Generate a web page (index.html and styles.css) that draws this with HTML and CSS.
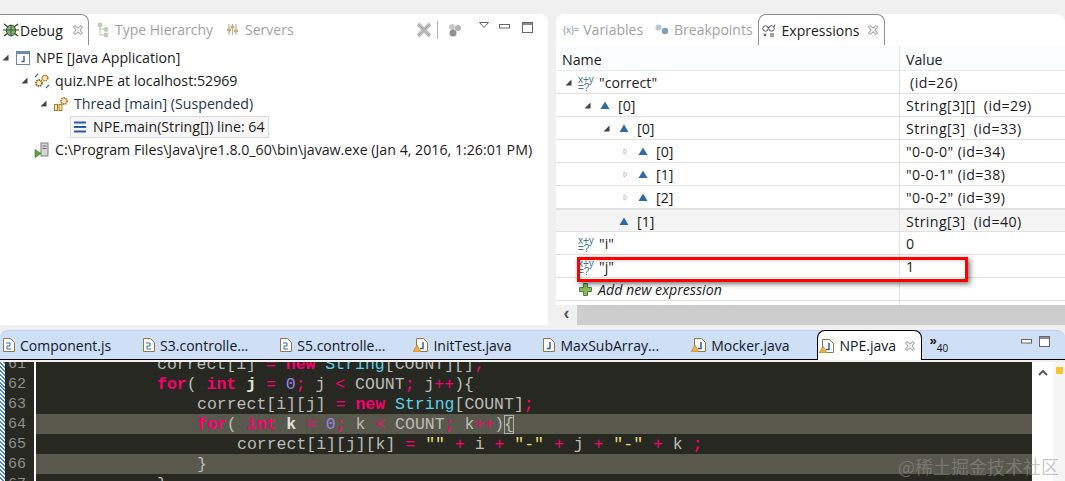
FILE: index.html
```html
<!DOCTYPE html>
<html lang="en">
<head>
  <meta charset="UTF-8" />
  <title>NPE.java - Debug</title>
  <link rel="stylesheet" href="styles.css">
</head>
<body>
  <svg class="defs">
    <symbol id="i-close" viewBox="0 0 12 12"><path d="M1.5 3 3 1.5 6 4.2 9 1.5 10.5 3 7.8 6l2.7 3L9 10.5 6 7.8l-3 2.7L1.5 9l2.7-3z" fill="#fff" stroke="#8c8c8c"/></symbol>
    <symbol id="i-bug" viewBox="0 0 16 16"><path d="M1 2l4 3M15 2l-4 3M0 8h4M16 8h-4M1 14l4-3M15 14l-4-3" stroke="#24402c" stroke-width="1.2"/><ellipse cx="8" cy="8.5" rx="4.6" ry="5.4" fill="#86b06c" stroke="#2c4a30"/><path d="M8 3v11M4 8h8" stroke="#2c4a30" stroke-width=".8"/></symbol>
    <symbol id="i-hier" viewBox="0 0 12 16"><path d="M3 3v10h5M3 7h5" stroke="#b9c9b5" fill="none"/><circle cx="3" cy="3" r="2.4" fill="#b6d3ae"/><circle cx="9" cy="7.5" r="2.4" fill="#b6d3ae"/><circle cx="9" cy="13" r="2.4" fill="#b6d3ae"/></symbol>
    <symbol id="i-servers" viewBox="0 0 13 13"><path d="M3 1v11M6.500 1v11M10 1v11" stroke="#b5b5a5" stroke-width="1.2"/><path d="M1 7h4M4.500 4h4M8 8h4" stroke="#c8b070" stroke-width="2.400"/></symbol>
    <symbol id="i-app" viewBox="0 0 16 16"><rect x="1.500" y="1.500" width="13" height="13" fill="#fff" stroke="#6d8aa8"/><path d="M2 3h12" stroke="#6d8aa8" stroke-width="2"/><path d="M9 6v5.500H6.500" stroke="#2f62a0" stroke-width="1.400" fill="none"/></symbol>
    <symbol id="i-gears" viewBox="0 0 16 16"><path d="M1 4 4 1M15 12l-3 3" stroke="#3a6ea5" stroke-width="1.200"/><circle cx="11" cy="5" r="2.800" fill="#fff0c8" stroke="#b87a20" stroke-width="1.600" stroke-dasharray="1.600 .6"/><circle cx="5" cy="10" r="3" fill="#fff0c8" stroke="#8f6420" stroke-width="1.800" stroke-dasharray="1.600 .6"/></symbol>
    <symbol id="i-thread" viewBox="0 0 16 16"><rect x="1.500" y="8.500" width="3" height="6" fill="#f6e6a8" stroke="#a08030"/><rect x="6" y="8.500" width="3" height="6" fill="#f6e6a8" stroke="#a08030"/><circle cx="11" cy="5" r="3" fill="#fff0c8" stroke="#b87a20" stroke-width="1.800" stroke-dasharray="1.600 .6"/></symbol>
    <symbol id="i-frame" viewBox="0 0 14 14"><path d="M1 2.500h12M1 7h12M1 11.500h12" stroke="#2a5ea0" stroke-width="1.800"/></symbol>
    <symbol id="i-proc" viewBox="0 0 16 16"><rect x="7" y="1" width="7" height="13" fill="#d8d8d8" stroke="#7f7f7f"/><path d="M8.500 4h4M8.500 6.500h4" stroke="#666"/><path d="M1 7.500l6 4-6 4z" fill="#5aa53c" stroke="#37752a" stroke-width=".6"/></symbol>
    <symbol id="i-skip" viewBox="0 0 16 16"><path d="M2 2 14 14M14 2 2 14" stroke="#bdbdbd" stroke-width="4"/><path d="M2 2 14 14M14 2 2 14" stroke="#a8a8a8" stroke-width="1"/></symbol>
    <symbol id="i-threads" viewBox="0 0 14 14"><circle cx="4" cy="4" r="3" fill="#c8c8c8"/><circle cx="10" cy="5" r="3" fill="#b4b4b4"/><circle cx="5" cy="10" r="3.500" fill="#8f8f8f"/></symbol>
    <symbol id="i-menu" viewBox="0 0 10 6"><path d="M.5.500h9L5 5.500z" fill="#fff" stroke="#666"/></symbol>
    <symbol id="i-min" viewBox="0 0 11 5"><rect x=".5" y=".5" width="10" height="3.500" fill="#fff" stroke="#666"/></symbol>
    <symbol id="i-max" viewBox="0 0 11 11"><rect x=".5" y=".5" width="10" height="10" fill="#fff" stroke="#666"/><path d="M1 2h9" stroke="#666" stroke-width="1.500"/></symbol>
    <symbol id="i-bps" viewBox="0 0 14 12"><circle cx="3.500" cy="3.500" r="3" fill="#b9c8d6"/><circle cx="10" cy="7" r="3.200" fill="#7f9fbd"/></symbol>
    <symbol id="i-glasses" viewBox="0 0 14 14"><circle cx="3.500" cy="5.500" r="2.700" fill="#fff" stroke="#555"/><circle cx="9.500" cy="5.500" r="2.700" fill="#fff" stroke="#555"/><path d="M6 4.500h1M12 4l1-2.500" stroke="#555"/><path d="M2 10.500l2 2.500M4 10.500l-2 2.500M8 11h4M8 13h4" stroke="#444"/></symbol>
    <symbol id="i-xy" viewBox="0 0 16 16"><text x="0" y="8" class="xy">x+y</text><text x="0" y="16" class="xy">=?</text></symbol>
    <symbol id="i-var" viewBox="0 0 16 16"><path d="M8 3.500l4.500 7.500h-9z" fill="#2f6aa8"/></symbol>
    <symbol id="i-open" viewBox="0 0 7 7"><path d="M6.500.5v6h-6z" fill="#444"/></symbol>
    <symbol id="i-shut" viewBox="0 0 7 9"><path d="M1.500 1l4 3.500-4 3.500z" fill="#fff" stroke="#b0b0b0"/></symbol>
    <symbol id="i-plus" viewBox="0 0 13 13"><path d="M4.500.5h4v4h4v4h-4v4h-4v-4h-4v-4h4z" fill="#8ab85e" stroke="#56803a"/></symbol>
    <symbol id="i-js" viewBox="0 0 12 14"><path d="M.5.500h7l4 4v9H.5z" fill="#fff" stroke="#8b7a4a"/><path d="M3 5h4v3H4v3h4" fill="none" stroke="#3a6ea5"/></symbol>
    <symbol id="i-java" viewBox="0 0 12 14"><path d="M.5.500h7l4 4v9H.5z" fill="#fff" stroke="#8b7a4a"/><path d="M7 4v6.500H4" fill="none" stroke="#2f62a0" stroke-width="1.500"/></symbol>
    <symbol id="i-javaw" viewBox="0 0 15 14"><path d="M3.500.500h7l4 4v9h-11z" fill="#fff" stroke="#8b7a4a"/><path d="M10 4v6.500H7" fill="none" stroke="#2f62a0" stroke-width="1.500"/><path d="M4 7l4 7H0z" fill="#f0b040" stroke="#a87420" stroke-width=".6"/></symbol>
  </svg>

  <div class="views">
    <!-- debug view -->
    <section class="panel debug">
      <div class="strip">
        <div class="tab active tab-debug"><svg class="ic16"><use href="#i-bug"/></svg><span>Debug</span><svg class="close"><use href="#i-close"/></svg></div>
        <div class="tab tab-type"><svg class="ic-hier"><use href="#i-hier"/></svg><span>Type Hierarchy</span></div>
        <div class="tab tab-servers"><svg class="ic-serv"><use href="#i-servers"/></svg><span>Servers</span></div>
        <div class="tools">
          <svg class="ic16"><use href="#i-skip"/></svg>
          <i class="sep"></i>
          <svg class="ic14"><use href="#i-threads"/></svg>
          <svg class="ic-menu"><use href="#i-menu"/></svg>
          <svg class="ic-min"><use href="#i-min"/></svg>
          <svg class="ic-max"><use href="#i-max"/></svg>
        </div>
      </div>
      <div class="tree">
        <div class="node lv0"><svg class="tw"><use href="#i-open"/></svg><svg class="ic16"><use href="#i-app"/></svg><span>NPE [Java Application]</span></div>
        <div class="node lv1"><svg class="tw"><use href="#i-open"/></svg><svg class="ic16"><use href="#i-gears"/></svg><span>quiz.NPE at localhost:52969</span></div>
        <div class="node lv2"><svg class="tw"><use href="#i-open"/></svg><svg class="ic16"><use href="#i-thread"/></svg><span class="thread">Thread [main] (Suspended)</span></div>
        <div class="node lv3"><i class="tw"></i><div class="frame"><svg class="ic14"><use href="#i-frame"/></svg><span>NPE.main(String[]) line: 64</span></div></div>
        <div class="node lv1"><i class="tw"></i><svg class="ic16"><use href="#i-proc"/></svg><span>C:\Program Files\Java\jre1.8.0_60\bin\javaw.exe (Jan 4, 2016, 1:26:01 PM)</span></div>
      </div>
    </section>

    <!-- expressions view -->
    <section class="panel exprs">
      <div class="strip">
        <div class="tab tab-vars"><span class="varicon">(x)=</span><span>Variables</span></div>
        <div class="tab tab-bps"><svg class="ic14"><use href="#i-bps"/></svg><span>Breakpoints</span></div>
        <div class="tab active tab-expr"><svg class="ic14"><use href="#i-glasses"/></svg><span>Expressions</span><svg class="close"><use href="#i-close"/></svg></div>
      </div>
      <div class="table">
        <div class="row head"><div class="name">Name</div><div class="value">Value</div></div>
        <div class="row"><div class="name node lv0"><svg class="tw"><use href="#i-open"/></svg><svg class="ic16"><use href="#i-xy"/></svg><span>"correct"</span></div><div class="value">&nbsp;(id=26)</div></div>
        <div class="row"><div class="name node lv1"><svg class="tw"><use href="#i-open"/></svg><svg class="ic16"><use href="#i-var"/></svg><span>[0]</span></div><div class="value">String[3][] &nbsp;(id=29)</div></div>
        <div class="row"><div class="name node lv2"><svg class="tw"><use href="#i-open"/></svg><svg class="ic16"><use href="#i-var"/></svg><span>[0]</span></div><div class="value">String[3] &nbsp;(id=33)</div></div>
        <div class="row"><div class="name node lv3"><svg class="tw"><use href="#i-shut"/></svg><svg class="ic16"><use href="#i-var"/></svg><span>[0]</span></div><div class="value">"0-0-0" (id=34)</div></div>
        <div class="row"><div class="name node lv3"><svg class="tw"><use href="#i-shut"/></svg><svg class="ic16"><use href="#i-var"/></svg><span>[1]</span></div><div class="value">"0-0-1" (id=38)</div></div>
        <div class="row"><div class="name node lv3"><svg class="tw"><use href="#i-shut"/></svg><svg class="ic16"><use href="#i-var"/></svg><span>[2]</span></div><div class="value">"0-0-2" (id=39)</div></div>
        <div class="row picked"><div class="name node lv2"><i class="tw"></i><svg class="ic16"><use href="#i-var"/></svg><span>[1]</span></div><div class="value">String[3] &nbsp;(id=40)</div></div>
        <div class="row"><div class="name node lv0"><i class="tw"></i><svg class="ic16"><use href="#i-xy"/></svg><span>"i"</span></div><div class="value">0</div></div>
        <div class="row"><div class="name node lv0"><i class="tw"></i><svg class="ic16"><use href="#i-xy"/></svg><span>"j"</span></div><div class="value">1</div></div>
        <div class="row"><div class="name node lv0 add"><i class="tw"></i><svg class="ic-plus"><use href="#i-plus"/></svg><span>Add new expression</span></div><div class="value"></div></div>
        <div class="row filler"><div class="name"></div><div class="value"></div></div>
      </div>
      <div class="hscroll"><span class="chev">&lsaquo;</span><div class="thumb"></div></div>
      <div class="redbox"></div>
    </section>
  </div>

  <!-- editor -->
  <section class="editor">
    <div class="edtabs">
      <div class="etab"><svg class="ic-file"><use href="#i-js"/></svg><span>Component.js</span></div>
      <div class="etab"><svg class="ic-file"><use href="#i-js"/></svg><span>S3.controlle...</span></div>
      <div class="etab"><svg class="ic-file"><use href="#i-js"/></svg><span>S5.controlle...</span></div>
      <div class="etab"><svg class="ic-filew"><use href="#i-javaw"/></svg><span>InitTest.java</span></div>
      <div class="etab wide"><svg class="ic-file"><use href="#i-java"/></svg><span>MaxSubArray...</span></div>
      <div class="etab"><svg class="ic-filew"><use href="#i-javaw"/></svg><span>Mocker.java</span></div>
      <div class="etab current"><svg class="ic-filew"><use href="#i-javaw"/></svg><span>NPE.java</span><svg class="close"><use href="#i-close"/></svg></div>
      <div class="more"><b>&raquo;</b><small>40</small></div>
      <div class="edtools">
        <svg class="ic-min"><use href="#i-min"/></svg>
        <svg class="ic-max"><use href="#i-max"/></svg>
      </div>
    </div>
    <div class="edbody">
      <div class="dither"></div>
      <div class="gutter">
        <div>61</div><div>62</div><div>63</div><div>64</div><div>65</div><div>66</div><div>67</div>
      </div>
      <div class="code">
        <div class="line in3">correct[i] <b class="op">=</b> <b class="kw">new</b> <b class="ty">String</b>[COUNT][]<b class="op">;</b></div>
        <div class="line in3"><b class="kw">for</b>( <b class="kw">int</b> <b class="vr">j</b> <b class="op">=</b> <b class="nm">0</b><b class="op">;</b> j <b class="op">&lt;</b> COUNT<b class="op">;</b> j<b class="op">++</b>){</div>
        <div class="line in4">correct[i][j] <b class="op">=</b> <b class="kw">new</b> <b class="ty">String</b>[COUNT]<b class="op">;</b></div>
        <div class="line in4 hl"><b class="kw">for</b>( <b class="kw">int</b> <b class="vr">k</b> <b class="op">=</b> <b class="nm">0</b><b class="op">;</b> k <b class="op">&lt;</b> COUNT<b class="op">;</b> k<b class="op">++</b>)<span class="match">{</span></div>
        <div class="line in5">correct[i][j][k] <b class="op">=</b> <b class="st">""</b> <b class="op">+</b> i <b class="op">+</b> <b class="st">"-"</b> <b class="op">+</b> j <b class="op">+</b> <b class="st">"-"</b> <b class="op">+</b> k <b class="op">;</b></div>
        <div class="line in4 hl">}</div>
        <div class="line in3">}</div>
      </div>
      <div class="vscroll"><svg class="up" viewBox="0 0 10 6"><path d="M1 5l4-4 4 4" fill="none" stroke="#555" stroke-width="2"/></svg></div>
      <div class="ruler"><i class="mark"></i></div>
    </div>
  </section>

  <div class="watermark">@稀土掘金技术社区</div>
</body>
</html>
```

FILE: styles.css
```css
* { margin: 0; padding: 0; box-sizing: border-box; }

body {
  width: 1065px;
  height: 481px;
  overflow: hidden;
  position: relative;
  padding-top: 14px;
  background: #f0f0f0;
  color: #1c1c1c;
  font-family: "Open Sans", sans-serif;
  font-size: 14.2px;
}

.defs { display: none; }
.xy { font: 10px "Liberation Sans", sans-serif; fill: #3f72a8; }

svg { flex: none; display: block; }
.ic16 { width: 16px; height: 16px; }
.ic14 { width: 14px; height: 14px; }
.ic-hier { width: 12px; height: 16px; }
.ic-serv { width: 13px; height: 13px; }
.ic-menu { width: 10px; height: 6px; margin-top: -10px; }
.ic-min { width: 11px; height: 5px; }
.ic-max { width: 11px; height: 11px; }
.ic-plus { width: 13px; height: 13px; margin-left: 1px; }
.ic-file { width: 12px; height: 14px; }
.ic-filew { width: 15px; height: 14px; margin-left: -4px; }
.close { width: 12px; height: 12px; }

.views { display: flex; height: 311px; gap: 8px; }

.panel { background: #fff; border-radius: 8px 8px 0 0; position: relative; }
.debug { width: 548px; }
.exprs { width: 509px; display: flex; flex-direction: column; }

.strip { display: flex; height: 32px; align-items: stretch; font-size: 14px; }

.tab { display: flex; align-items: center; color: #a2a2a2; height: 31px; }
.tab.active {
  color: #1c1c1c;
  border: 1px solid #8f8f8f;
  border-bottom: none;
  border-radius: 8px 8px 0 0;
  background: #fff;
}
.tab-debug { width: 89px; border-left: none !important; border-top-left-radius: 0 !important; padding-left: 3px; }
.tab-debug span { margin: 0 9px 0 1px; }
.tab-type { margin-left: 8px; gap: 6px; }
.tab-servers { margin-left: 13px; gap: 6px; }

.tools { margin-left: auto; padding-right: 15px; display: flex; align-items: center; }
.tools .sep { width: 1px; height: 18px; background: #b5b5b5; margin: 0 10px 0 5px; }
.tools .ic-menu { margin-left: 17px; }
.tools .ic-min { margin: -8px 0 0 10px; }
.tools .ic-max { margin: -6px 0 0 12px; }

.tab-vars { margin-left: 7px; }
.varicon { font: bold 9px "Liberation Sans", sans-serif; color: #a9b4c2; margin-right: 4px; }
.tab-bps { margin-left: 12px; gap: 5px; }
.tab-expr { margin-left: 5px; width: 127px; padding-left: 3px; }
.tab-expr span { margin: 0 8px 0 6px; }

.tree { padding-left: 2px; }

.node { display: flex; align-items: center; height: 23px; }
.tw { display: block; flex: none; width: 7px; height: 7px; margin-right: 6px; }
.node > svg.ic16 { margin-right: 5px; }
.node > svg.ic-plus { margin-right: 6px; }
.lv1 { padding-left: 19px; }
.lv2 { padding-left: 38px; }
.lv3 { padding-left: 57px; }
.thread { color: #1f3550; }

.frame {
  display: flex;
  align-items: center;
  gap: 6px;
  width: 199px;
  height: 22px;
  margin-left: -2px;
  padding-left: 2px;
  background: #f6f6f6;
  border: 1px solid #dcdcdc;
}

.table { flex: 1; }
.row { display: grid; grid-template-columns: 344px 1fr; height: 23px; border-bottom: 1px solid #e0e0e0; background: #fff; }
.row .name { border-right: 1px solid #e3e3e3; padding-left: 9px; }
.row .lv1 { padding-left: 28px; }
.row .lv2 { padding-left: 47px; }
.row .lv3 { padding-left: 66px; }
.row .value { padding-left: 6px; line-height: 24px; letter-spacing: .4px; }
.head { height: 25px; background: #fbfdff; border-bottom: 1px solid #e3ecf6; }
.head .name { line-height: 27px; padding-left: 6px; }
.head .value { line-height: 27px; letter-spacing: 0; }
.picked { background: #f5f5f5; border-top: 2px solid #e0e0e0; margin-top: -1px; height: 24px; }
.add span { font-style: italic; }
.filler { height: 4px; border: none; }

.hscroll { display: flex; height: 20px; background: #f0f0f0; }
.chev { width: 21px; text-align: center; color: #555; font: bold 18px/17px "Liberation Sans", sans-serif; }
.thumb { flex: 1; background: #cdcdcd; }

.redbox {
  position: absolute;
  left: 21px;
  top: 243px;
  width: 391px;
  height: 25px;
  border: 3px solid #f00;
  box-shadow: 2px 2px 5px rgba(0, 0, 0, .55), inset 1px 1px 3px rgba(0, 0, 0, .15);
}

.editor { margin-top: 5px; }

.edtabs {
  display: flex;
  align-items: center;
  height: 30px;
  padding-left: 3px;
  font-size: 14px;
  background: #cfdff5;
  border-top: 1px solid #bccfe8;
  border-bottom: 1px solid #000;
  border-radius: 8px 8px 0 0;
}
.etab { display: flex; align-items: center; gap: 5px; margin-right: 32px; color: #10182a; }
.etab.wide { margin-right: 36px; }
.etab.current {
  height: 30px;
  margin: -1px 0 -1px -5px;
  width: 105px;
  padding-left: 5px;
  background: #fff;
  border: 1px solid #000;
  border-bottom: none;
  border-radius: 8px 8px 0 0;
}
.etab.current span { margin: 0 3px 0 1px; }
.more { display: flex; margin-left: 8px; color: #111; }
.more b { font: bold 13px/12px "Liberation Sans", sans-serif; }
.more small { font-size: 10px; margin-top: 6px; }
.edtools { margin-left: auto; padding: 0 15px 8px 0; display: flex; align-items: center; gap: 7px; }

.edbody { display: flex; height: 120px; margin-top: 2px; background: #272822; overflow: hidden; }
.dither { width: 5px; background: repeating-linear-gradient(45deg, #4a8be0 0 1.4px, #fff 1.4px 2.8px); }
.gutter {
  width: 29px;
  padding-left: 3px;
  margin-top: -7px;
  color: #8f908a;
  font: 15px/20px "Liberation Mono", monospace;
}
.code {
  width: 996px;
  margin-left: 2px;
  margin-top: -8px;
  color: #bdbdb5;
  font: 16.5px/22px "Liberation Mono", monospace;
  box-shadow: -2px 0 0 #fff;
}
.line { height: 20px; white-space: pre; }
.in3 { padding-left: 121px; }
.in4 { padding-left: 161px; }
.in5 { padding-left: 201px; }
.hl { background: #58584c; }
.match { outline: 1px solid #b0b0b0; outline-offset: -1px; }
.line b { font-weight: normal; }
.line .kw { color: #f9006e; font-weight: bold; }
.ty { color: #5fd0e6; }
.op { color: #f9006e; }
.nm { color: #9a80e8; }
.line .vr { color: #e0e0d8; font-weight: bold; }
.st { color: #e6db74; }

.vscroll { width: 21px; background: #fff; }
.up { width: 10px; height: 6px; margin: 8px 0 0 6px; }
.ruler { flex: 1; background: #f5f5f5; }
.mark { display: block; width: 7px; height: 7px; margin: 5px 0 0 3px; background: #f5c431; }

.watermark {
  position: absolute;
  left: 898px;
  top: 453px;
  font: 18px "Noto Sans CJK SC", sans-serif;
  color: rgba(150, 150, 150, .55);
  white-space: nowrap;
}
```
